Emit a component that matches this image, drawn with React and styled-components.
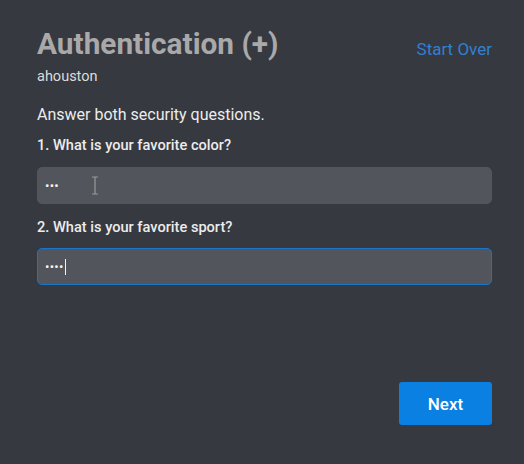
import React from "react";
import styled, { createGlobalStyle } from "styled-components";

const GlobalStyle = createGlobalStyle`
  html, body {
    margin: 0;
    padding: 0;
    background: #36393f;
  }
  body {
    font-family: Roboto, "Liberation Sans", sans-serif;
  }
`;

const Page = styled.div`
  width: 524px;
  height: 464px;
  box-sizing: border-box;
  padding: 26px 32px 0 37px;
  background: #36393f;
  display: flex;
  flex-direction: column;
`;

const Header = styled.div`
  display: flex;
  justify-content: space-between;
  align-items: flex-end;
`;

const Title = styled.h1`
  margin: 0;
  font-size: 29.8px;
  line-height: 35px;
  font-weight: 700;
  color: #a9a9aa;
`;

const StartOver = styled.a`
  font-size: 17px;
  color: #2f80d3;
  margin-bottom: 2px;
  cursor: pointer;
`;

const User = styled.div`
  margin-top: 7px;
  font-size: 14.5px;
  color: #dcdcdc;
`;

const Prompt = styled.p`
  margin: 20px 0 0;
  font-size: 16px;
  color: #ececec;
`;

const Label = styled.label`
  display: block;
  margin-top: ${(p) => p.$top}px;
  font-size: 14.6px;
  font-weight: 500;
  color: #ececec;
`;

const Field = styled.div`
  position: relative;
  margin-top: ${(p) => p.$top}px;
  height: 37px;
  box-sizing: border-box;
  border-radius: 5px;
  background: #52555c;
  border: 1px solid ${(p) => (p.$focused ? "#1c74c9" : "#52555c")};
  display: flex;
  align-items: center;
  padding-left: 7px;
  color: #f2f2f2;
  font-size: 13px;
  letter-spacing: 0.3px;
`;

const Caret = styled.span`
  display: inline-block;
  width: 1px;
  height: 16px;
  background: #f2f2f2;
  margin-left: 1px;
`;

const IBeam = styled.svg`
  position: absolute;
  left: 53px;
  top: 8px;
`;

const Footer = styled.div`
  margin-top: 97px;
  display: flex;
  justify-content: flex-end;
`;

const NextButton = styled.button`
  width: 93px;
  height: 43px;
  border: none;
  border-radius: 3px;
  background: #0a80e3;
  color: #ffffff;
  font-family: Roboto, "Liberation Sans", sans-serif;
  font-size: 17px;
  font-weight: 500;
  cursor: pointer;
`;

export default function App() {
  return (
    <>
      <GlobalStyle />
      <Page>
        <Header>
          <Title>Authentication (+)</Title>
          <StartOver>Start Over</StartOver>
        </Header>
        <User>ahouston</User>
        <Prompt>Answer both security questions.</Prompt>
        <Label $top={12}>1. What is your favorite color?</Label>
        <Field $top={13}>
          •••
          <IBeam width="8" height="19" viewBox="0 0 8 19">
            <path d="M1 1h6M4 1v17M1 18h6" stroke="#9a9a9a" strokeWidth="1.2" fill="none" />
          </IBeam>
        </Field>
        <Label $top={14}>2. What is your favorite sport?</Label>
        <Field $top={12} $focused>
          ••••
          <Caret />
        </Field>
        <Footer>
          <NextButton>Next</NextButton>
        </Footer>
      </Page>
    </>
  );
}
